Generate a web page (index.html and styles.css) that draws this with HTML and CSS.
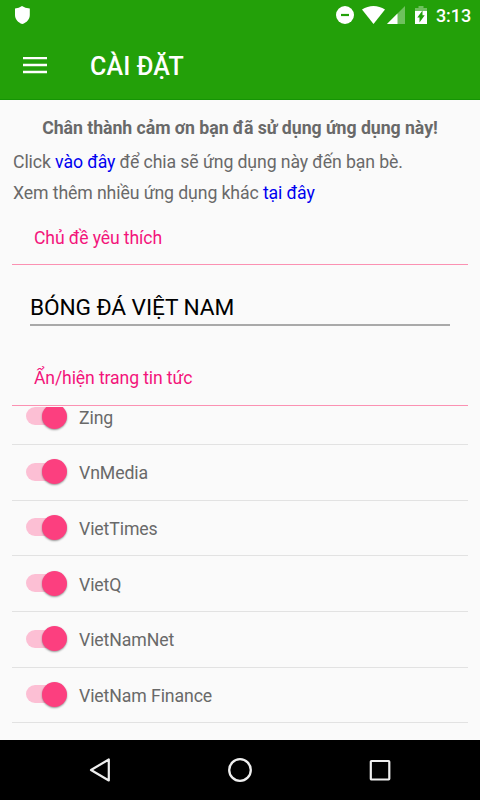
FILE: index.html
```html
<!DOCTYPE html>
<html lang="vi">
<head>
<meta charset="utf-8">
<title>Cài đặt</title>
<link rel="stylesheet" href="styles.css">
</head>
<body>
<header class="top">
  <div class="status">
    <svg class="shield" width="16" height="18" viewBox="0 0 16 18"><path d="M8 0Q11 2 15.800 2.600V9c0 4.200-3 7.600-7.500 9C4 16.600 1 13.200 1 9V2.600Q5 2 8 0z" fill="#fff"/></svg>
    <svg class="indicators" width="94" height="20" viewBox="0 0 94 20">
      <circle cx="9" cy="10" r="9" fill="#fff"/><path d="M5 10h8" stroke="#23a009" stroke-width="2.200"/>
      <path d="M26 4.500C33-.3 42-.3 49 4.500L37.500 19z" fill="#fff"/>
      <path d="M69 1v18H51z" fill="#fff" opacity=".35"/><path d="M61.500 8.500V19H51z" fill="#fff"/>
      <path d="M79 6V3h3.500V1h5v2H91v3z" fill="#fff" opacity=".35"/><path d="M79 6h12v13H79z" fill="#fff"/>
      <path d="M86.500 5.500v4.700h2.200L83.500 17.500v-5h-2.200z" fill="#23a009"/>
    </svg>
    <span class="clock">3:13</span>
  </div>
  <div class="toolbar">
    <svg width="24" height="18" viewBox="0 0 24 18"><path d="M0 1h24M0 8h24M0 15h24" stroke="#fff" stroke-width="2.600"/></svg>
    <h1>CÀI ĐẶT</h1>
  </div>
</header>
<main>
  <p class="thanks">Chân thành cảm ơn bạn đã sử dụng ứng dụng này!</p>
  <p class="line">Click <a>vào đây</a> để chia sẽ ứng dụng này đến bạn bè.</p>
  <p class="line">Xem thêm nhiều ứng dụng khác <a>tại đây</a></p>
  <h2 class="first">Chủ đề yêu thích</h2>
  <div class="field">BÓNG ĐÁ VIỆT NAM</div>
  <h2 class="second">Ẩn/hiện trang tin tức</h2>
  <div class="viewport">
    <ul>
      <li><i class="switch"></i><span>Zing</span></li>
      <li><i class="switch"></i><span>VnMedia</span></li>
      <li><i class="switch"></i><span>VietTimes</span></li>
      <li><i class="switch"></i><span>VietQ</span></li>
      <li><i class="switch"></i><span>VietNamNet</span></li>
      <li><i class="switch"></i><span>VietNam Finance</span></li>
    </ul>
  </div>
</main>
<nav>
  <svg width="24" height="26" viewBox="0 0 24 26"><path d="M20.800 2.500v21L3 13z" fill="none" stroke="#eee" stroke-width="2.200" stroke-linejoin="round"/></svg>
  <svg width="24" height="24" viewBox="0 0 24 24"><circle cx="12" cy="12" r="10.800" fill="none" stroke="#eee" stroke-width="2.300"/></svg>
  <svg width="24" height="24" viewBox="0 0 24 24"><rect x="2.800" y="3" width="18.500" height="18.500" rx=".7" fill="none" stroke="#eee" stroke-width="2.200"/></svg>
</nav>
</body>
</html>
```
FILE: styles.css
```css
* { box-sizing: border-box; }
body {
  margin: 0;
  width: 480px;
  height: 800px;
  display: flex;
  flex-direction: column;
  overflow: hidden;
  background: #fafafa;
  color: #696969;
  font: 17.700px/24px Roboto, sans-serif;
  letter-spacing: -0.110px;
}
h1, h2, p, ul { margin: 0; padding: 0; }
.top {
  height: 100px;
  flex: none;
  background: #23a009;
  border-bottom: 1px solid #159404;
  color: #fff;
}
.status {
  height: 36px;
  display: flex;
  align-items: flex-start;
  padding: 5px 10px 0 14px;
}
.shield { margin-top: 1px; }
.indicators { margin-left: auto; }
.clock {
  width: 34px;
  margin-left: 6px;
  font-size: 18px;
  font-weight: 500;
  line-height: 22px;
  white-space: nowrap;
}
.toolbar {
  height: 59px;
  display: flex;
  align-items: center;
  padding-left: 23px;
  gap: 43px;
}
h1 { font-size: 25px; font-weight: 500; line-height: 30px; padding-top: 2px; letter-spacing: 0.150px; }
main {
  flex: 1;
  min-height: 0;
  display: flex;
  flex-direction: column;
  padding: 16px 12px 0;
}
.thanks { height: 34px; text-align: center; font-weight: 700; white-space: nowrap; letter-spacing: -0.040px; }
.line { height: 31px; padding-left: 1px; white-space: nowrap; }
a { color: #0000f0; }
h2 {
  font-weight: 400;
  font-size: 17.600px;
  line-height: 24px;
  color: #f3157b;
  border-bottom: 1px solid #fb91b2;
  padding-left: 22px;
}
.first { height: 53px; padding-top: 14px; }
.field {
  height: 44px;
  margin: 17px 18px 0;
  padding-top: 12px;
  border-bottom: 2px solid #a9a9a9;
  color: #000;
  font-size: 22.700px;
  line-height: 28px;
}
.second { height: 80px; padding-top: 40px; }
.viewport { flex: 1; min-height: 0; overflow: hidden; margin-top: 1px; }
ul { list-style: none; margin-top: -17.500px; }
li {
  height: 55.650px;
  display: flex;
  align-items: center;
  padding: 0 0 1.400px 14px;
  border-bottom: 1px solid #e2e2e2;
}
li span { margin-left: 12px; padding-top: 3px; }
.switch {
  width: 41px;
  height: 26px;
  display: grid;
  align-items: center;
}
.switch::before,
.switch::after { content: ""; grid-area: 1 / 1; }
.switch::before {
  width: 32px;
  height: 18px;
  border-radius: 9px;
  background: #fcbfd4;
}
.switch::after {
  justify-self: end;
  width: 25px;
  height: 25px;
  border-radius: 50%;
  background: #fc3f7f;
  box-shadow: 0 1px 2px rgba(0, 0, 0, .4);
}
nav {
  height: 60px;
  flex: none;
  display: flex;
  align-items: center;
  justify-content: center;
  gap: 116px;
  background: #000;
}
```
